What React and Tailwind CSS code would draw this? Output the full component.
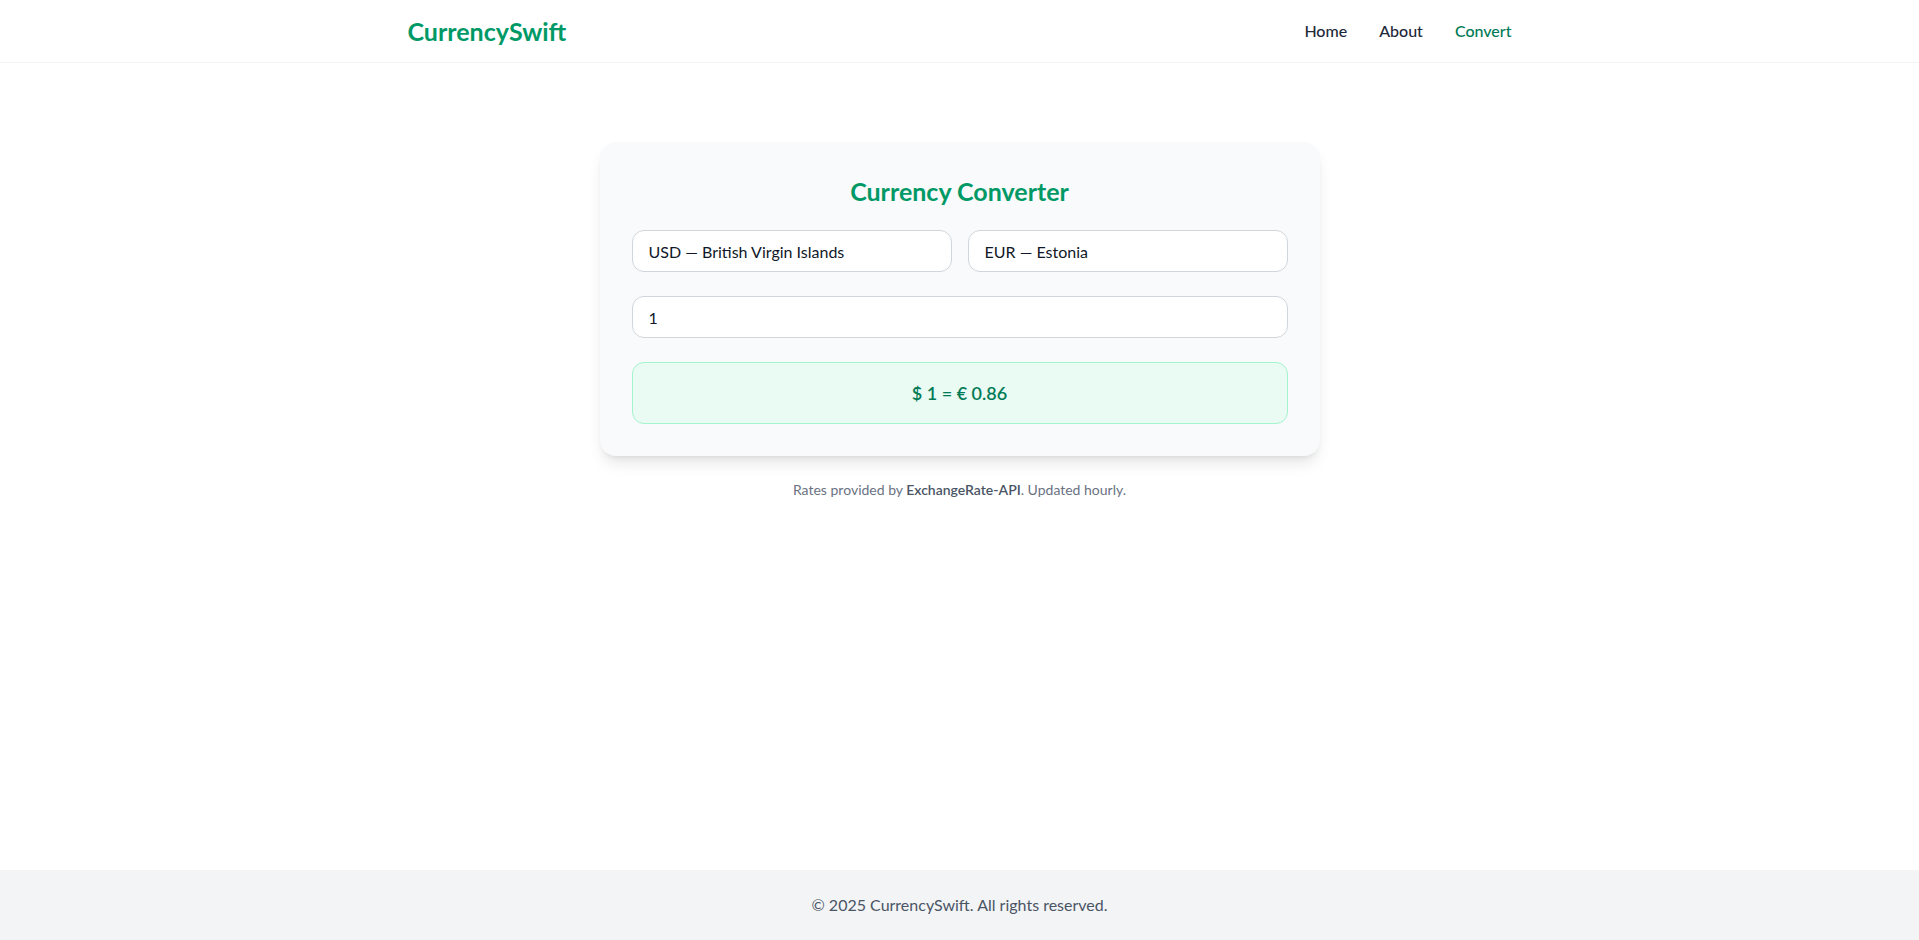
import { useState } from 'react';

const rates = { USD: 1, EUR: 0.86 };

const App = () => {
  const [from, setFrom] = useState('USD — British Virgin Islands');
  const [to, setTo] = useState('EUR — Estonia');
  const [amount, setAmount] = useState('1');

  const result = ((Number(amount) || 0) * rates.EUR).toFixed(2);

  return (
    <div className="min-h-screen flex flex-col bg-white font-['Lato','Noto_Sans',sans-serif]">
      {/* Header */}
      <header className="border-b border-gray-100">
        <div className="max-w-6xl mx-auto px-6 h-[62px] flex items-center justify-between">
          <div className="text-[25px] font-bold text-emerald-600 pt-0.5">CurrencySwift</div>
          <nav className="flex items-center gap-8 text-base font-medium">
            <a className="text-gray-800 hover:text-emerald-600" href="#">Home</a>
            <a className="text-gray-800 hover:text-emerald-600" href="#">About</a>
            <a className="text-emerald-700" href="#">Convert</a>
          </nav>
        </div>
      </header>

      {/* Main */}
      <main className="flex-1 px-6 pt-[79px]">
        <div className="w-[720px] mx-auto bg-gray-50 rounded-2xl shadow-lg p-8">
          <h1 className="text-[25px] leading-8 pt-px font-bold text-emerald-600 text-center mb-[23px]">Currency Converter</h1>

          <div className="grid grid-cols-2 gap-4">
            <input
              value={from}
              onChange={e => setFrom(e.target.value)}
              className="h-[42px] w-full bg-white border border-gray-300 rounded-xl px-4 text-base text-gray-900 outline-none focus:border-emerald-500"
            />
            <input
              value={to}
              onChange={e => setTo(e.target.value)}
              className="h-[42px] w-full bg-white border border-gray-300 rounded-xl px-4 text-base text-gray-900 outline-none focus:border-emerald-500"
            />
          </div>

          <input
            value={amount}
            onChange={e => setAmount(e.target.value)}
            className="mt-6 h-[42px] w-full bg-white border border-gray-300 rounded-xl px-4 text-base text-gray-900 outline-none focus:border-emerald-500"
          />

          <div className="mt-6 bg-[#e9fbf3] border border-emerald-200 rounded-xl p-4 text-center text-lg font-semibold text-emerald-700">
            $ {amount} = € {result}
          </div>
        </div>

        <p className="mt-6 text-center text-sm text-gray-500">
          Rates provided by <span className="font-semibold text-gray-600">ExchangeRate-API</span>. Updated hourly.
        </p>
      </main>

      {/* Footer */}
      <footer className="bg-gray-100 h-[70px] flex items-center justify-center text-base text-gray-600">
        © 2025 CurrencySwift. All rights reserved.
      </footer>
    </div>
  );
};

export default App;
